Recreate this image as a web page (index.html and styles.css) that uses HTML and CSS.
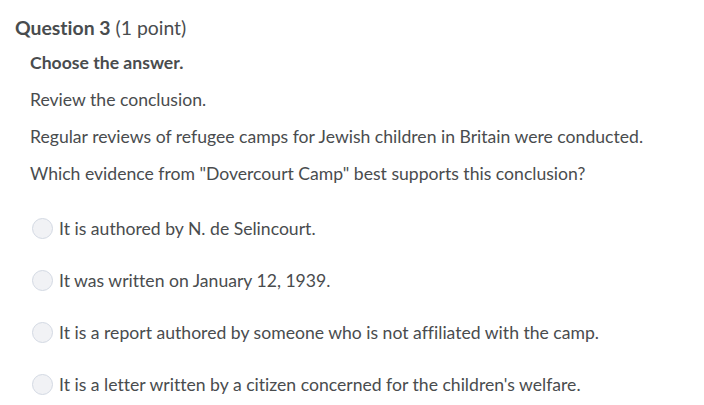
FILE: index.html
```html
<!DOCTYPE html>
<html>
<head>
<meta charset="utf-8">
<link rel="stylesheet" href="styles.css">
</head>
<body>
<div class="question">
  <h2 class="q-title"><span class="q-num">Question 3</span> (1 point)</h2>
  <div class="q-body">
    <p class="instr">Choose the answer.</p>
    <p>Review the conclusion.</p>
    <p>Regular reviews of refugee camps for Jewish children in Britain were conducted.</p>
    <p>Which evidence from "Dovercourt Camp" best supports this conclusion?</p>
    <ul class="options">
      <li class="option"><span class="radio"></span><span class="opt-text">It is authored by N. de Selincourt.</span></li>
      <li class="option"><span class="radio"></span><span class="opt-text">It was written on January 12, 1939.</span></li>
      <li class="option"><span class="radio"></span><span class="opt-text">It is a report authored by someone who is not affiliated with the camp.</span></li>
      <li class="option"><span class="radio"></span><span class="opt-text">It is a letter written by a citizen concerned for the children's welfare.</span></li>
    </ul>
  </div>
</div>
</body>
</html>
```

FILE: styles.css
```css
html, body {
  margin: 0;
  padding: 0;
  background: #ffffff;
}
body {
  font-family: Lato, "Liberation Sans", sans-serif;
  color: #494c4e;
  font-size: 17.6px;
  font-variant-ligatures: none;
}
.question {
  padding: 16px 0 0 15px;
}
.q-title {
  margin: 0;
  font-size: 19.4px;
  font-weight: normal;
  line-height: 24px;
}
.q-num {
  font-weight: bold;
}
.q-body {
  padding-left: 15px;
}
.q-body p {
  margin: 0;
  line-height: 37px;
}
.q-body .instr {
  font-weight: bold;
  margin-top: 4px;
}
.options {
  list-style: none;
  margin: 10px 0 0 0;
  padding: 0;
}
.option {
  display: flex;
  align-items: center;
  height: 52px;
}
.radio {
  box-sizing: border-box;
  width: 21px;
  height: 21px;
  border-radius: 50%;
  border: 1px solid #d3d9e3;
  background: #f1f2f5;
  margin-left: 2px;
  margin-right: 6px;
  flex: none;
}
```
